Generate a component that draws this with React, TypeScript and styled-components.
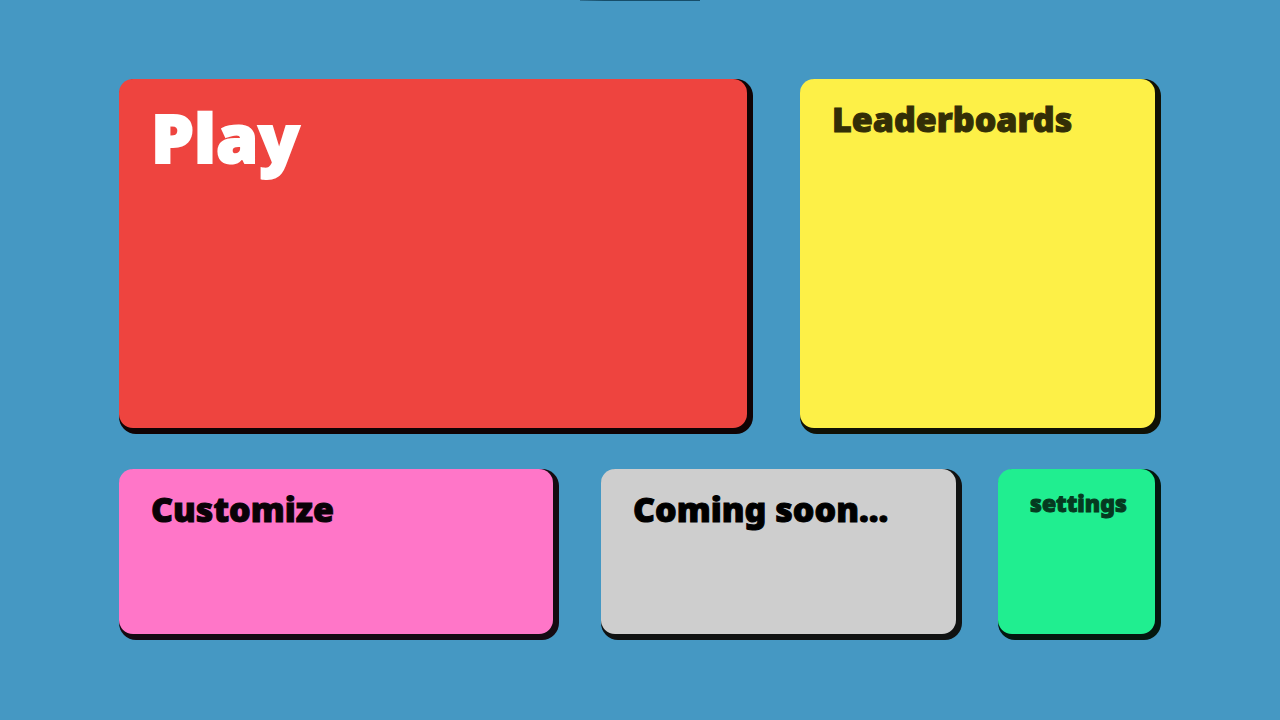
import React from "react";
import styled, { createGlobalStyle } from "styled-components";

const GlobalStyle = createGlobalStyle`
  *, *::before, *::after { box-sizing: border-box; }
  body { margin: 0; background: #4598c3; }
`;

const Screen = styled.main`
  position: relative;
  display: grid;
  grid-template-rows: 349fr 165fr;
  gap: 41px;
  min-height: 100vh;
  padding: 79px 125px 86px 119px;
  background: #4598c3;
`;

const Notch = styled.div`
  position: absolute;
  top: 0;
  left: 50%;
  width: 120px;
  height: 1px;
  margin-left: -60px;
  background: linear-gradient(to right, #2f7092, #164d69 24px);
`;

/* Odd tracks hold the tiles, even tracks are the spaces between them. */
const Row = styled.div<{ $tracks: string }>`
  display: grid;
  grid-template-columns: ${(p) => p.$tracks};

  > :nth-child(2) { grid-column: 3; }
  > :nth-child(3) { grid-column: 5; }
`;

const Tile = styled.button<{ $fill: string; $edge: string; $ink: string }>`
  display: flex;
  align-items: flex-start;
  min-width: 0;
  padding: 20px 32px;
  border: 0;
  border-radius: 14px;
  background: ${(p) => p.$fill};
  box-shadow: 3px 3px 0 3px ${(p) => p.$edge};
  color: ${(p) => p.$ink};
  font-family: "Noto Sans", sans-serif;
  font-weight: 900;
  text-align: left;
  white-space: nowrap;
  cursor: pointer;
`;

const Title = styled.span<{ $size: "large" | "medium" | "small" }>`
  font-size: ${(p) => ({ large: 68, medium: 34, small: 23 })[p.$size]}px;
  line-height: ${(p) => ({ large: 76, medium: 40, small: 28 })[p.$size]}px;
  -webkit-text-stroke: ${(p) => ({ large: 2, medium: 1, small: 1 })[p.$size]}px currentColor;
`;

export default function App() {
  return (
    <>
      <GlobalStyle />
      <Screen>
        <Notch />
        <Row $tracks="628fr 53fr 355fr">
          <Tile $fill="#ee443f" $edge="#100304" $ink="#ffffff">
            <Title $size="large">Play</Title>
          </Tile>
          <Tile $fill="#fdf047" $edge="#101105" $ink="#332e06">
            <Title $size="medium">Leaderboards</Title>
          </Tile>
        </Row>
        <Row $tracks="434fr 48fr 355fr 42fr 157fr">
          <Tile $fill="#ff76c8" $edge="#150a12" $ink="#0a0207">
            <Title $size="medium">Customize</Title>
          </Tile>
          <Tile $fill="#cecece" $edge="#101212" $ink="#000000">
            <Title $size="medium">Coming soon...</Title>
          </Tile>
          <Tile $fill="#20ee90" $edge="#04170f" $ink="#053a20">
            <Title $size="small">settings</Title>
          </Tile>
        </Row>
      </Screen>
    </>
  );
}
